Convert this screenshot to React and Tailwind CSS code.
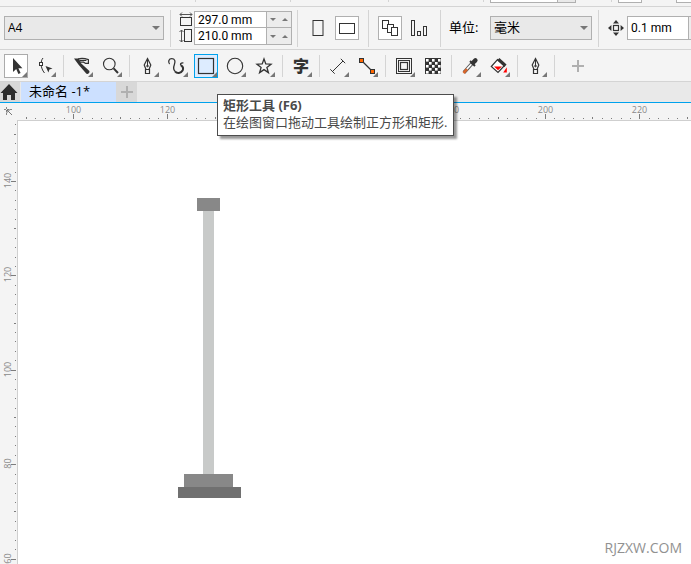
import { useEffect, useState } from "react";
import clsx from "clsx";

const STEP = 9.44;
const DARK = "#333333";

// Both rulers count in millimetres, one tick every 2 mm
const horizontalTicks = (length) =>
  Array.from({ length: Math.ceil(length / STEP) }, (_, i) => ({
    pos: Math.round(73 + (i - 5) * STEP) + 0.5,
    value: 90 + i * 2,
  })).filter((t) => t.pos < length);

const verticalTicks = (length) =>
  Array.from({ length: Math.ceil(length / STEP) }, (_, i) => ({
    pos: Math.round(61 + (i - 6) * STEP) + 0.5,
    value: 152 - i * 2,
  })).filter((t) => t.pos < length);

const useWindowSize = () => {
  const [size, setSize] = useState({ width: window.innerWidth, height: window.innerHeight });

  useEffect(() => {
    const onResize = () => setSize({ width: window.innerWidth, height: window.innerHeight });
    window.addEventListener("resize", onResize);
    return () => window.removeEventListener("resize", onResize);
  }, []);

  return size;
};

const Icon = ({ children, size = 22 }) => (
  <svg width={size} height={size} viewBox="0 0 22 22" fill="none" stroke={DARK} aria-hidden="true">
    {children}
  </svg>
);

const PenIcon = () => (
  <Icon>
    <path d="M10.5 3.5 L13.8 10 L12 14.5 H9 L7.2 10 Z" strokeWidth="1.2" />
    <path d="M10.5 4 V10.5" />
    <circle cx="10.5" cy="11" r="0.8" fill={DARK} />
    <path d="M8.5 14.5 H12.5 V18.5 H8.5 Z" strokeWidth="1.2" />
  </Icon>
);

const tools = [
  {
    id: "pick",
    label: "选择工具",
    icon: (
      <Icon>
        <path d="M8 3 V17 L11.2 14 L13.4 19 L15.6 18 L13.4 13.2 H17.4 Z" fill={DARK} stroke="none" />
      </Icon>
    ),
    flyout: true,
  },
  {
    id: "shape",
    label: "形状工具",
    icon: (
      <Icon>
        <path d="M9 3 C6.3 6 6.3 13 10.5 18" />
        <rect x="5.5" y="7.5" width="3" height="3" fill="white" />
        <path d="M11.5 11 L18.5 13.6 L15.4 14.6 L14.4 17.6 Z" fill={DARK} stroke="none" />
      </Icon>
    ),
    flyout: true,
  },
  null,
  {
    id: "crop",
    label: "裁剪工具",
    icon: (
      <Icon>
        <path d="M3 3.6 H8 L10 8.2 L18.4 16 C19 18 17 19.4 15.4 18.8 L7.6 9.8 Z" fill={DARK} stroke="none" />
        <path d="M7 4 C10 3 14 3.4 17.4 4.6 V8.4 H14.6 L12.6 7.2 H8" strokeWidth="1.2" />
        <path d="M9 5.4 H15.4" strokeWidth="1.2" />
      </Icon>
    ),
    flyout: true,
  },
  {
    id: "zoom",
    label: "缩放工具",
    icon: (
      <Icon>
        <circle cx="9.3" cy="9" r="5.8" strokeWidth="1.1" />
        <path d="M13.6 13.4 L18 18" strokeWidth="2" />
      </Icon>
    ),
    flyout: true,
  },
  null,
  { id: "pen", label: "钢笔工具", icon: <PenIcon />, flyout: true },
  {
    id: "curve",
    label: "曲线工具",
    icon: (
      <Icon>
        <path d="M3.6 9 C1.6 6.8 3 3.6 5.7 3.6 C9 3.6 9.6 6.4 8.4 9.4 C7.4 12 7.4 14.6 9 16.4" strokeWidth="1.3" />
        <path d="M9 16.4 C11 18.8 15 18.4 16.6 15.6 C17.8 13 16.6 11.4 15 10.4" strokeWidth="2" />
        <path d="M15.4 10.8 C13.6 9.4 14.6 7.6 17.4 7.8" strokeWidth="1.3" />
      </Icon>
    ),
    flyout: true,
  },
  {
    id: "rect",
    label: "矩形工具",
    icon: (
      <Icon>
        <rect x="3.5" y="3.5" width="15" height="15" strokeWidth="1.2" />
      </Icon>
    ),
    flyout: true,
  },
  {
    id: "ellipse",
    label: "椭圆形工具",
    icon: (
      <Icon>
        <circle cx="11" cy="11" r="7.7" strokeWidth="1.1" />
      </Icon>
    ),
    flyout: true,
  },
  {
    id: "star",
    label: "星形工具",
    icon: (
      <Icon>
        <path
          d="M11 4 L12.8 8.9 L18 9.2 L13.9 12.4 L15.4 17.6 L11 14.6 L6.6 17.6 L8.1 12.4 L4 9.2 L9.2 8.9 Z"
          strokeWidth="1.3"
        />
      </Icon>
    ),
    flyout: true,
  },
  null,
  {
    id: "text",
    label: "文本工具",
    icon: <span className="text-base leading-none font-black text-[#333333]">字</span>,
    flyout: true,
  },
  null,
  {
    id: "dimension",
    label: "平行度量工具",
    icon: (
      <Icon>
        <path d="M5.5 16.5 L16 6 M3.3 14.3 L7.7 18.7 M13.8 3.8 L18.2 8.2" />
      </Icon>
    ),
    flyout: true,
  },
  {
    id: "connector",
    label: "连接器工具",
    icon: (
      <Icon>
        <path d="M6 6 L17 17" strokeWidth="1.3" />
        <rect x="3.5" y="3.5" width="4" height="4" fill="#ff6600" />
        <rect x="14.5" y="14.5" width="4" height="4" fill="#ff6600" />
      </Icon>
    ),
    flyout: true,
  },
  null,
  {
    id: "contour",
    label: "轮廓图工具",
    icon: (
      <Icon>
        <rect x="3.5" y="3.5" width="15" height="15" />
        <rect x="5.5" y="5.5" width="11" height="11" />
        <rect x="7.5" y="7.5" width="7" height="7" strokeWidth="1.2" />
      </Icon>
    ),
    flyout: true,
  },
  {
    id: "transparency",
    label: "透明度工具",
    icon: (
      <Icon>
        <rect x="3" y="3" width="16" height="16" fill={DARK} stroke="none" />
        {[0, 1, 2, 3, 4].map((row) =>
          [0, 1, 2, 3, 4].map(
            (col) =>
              (row + col) % 2 === 0 && (
                <rect
                  key={`${row}-${col}`}
                  x={4 + col * 3}
                  y={4 + row * 3}
                  width="2.6"
                  height="2.6"
                  fill="white"
                  stroke="none"
                />
              )
          )
        )}
      </Icon>
    ),
  },
  null,
  {
    id: "eyedropper",
    label: "颜色滴管工具",
    icon: (
      <Icon>
        <path d="M5 17.5 L13 8.5" stroke="#555555" strokeWidth="3.4" />
        <path d="M7.6 14.4 L13 8.5" stroke="white" strokeWidth="1.6" />
        <path d="M4.5 18 L8 14.2" stroke="#d9662b" strokeWidth="2.6" />
        <path d="M11 6 L16 11" strokeWidth="2" />
        <path d="M14 7.8 L16.4 5.4" strokeWidth="4.4" strokeLinecap="round" />
      </Icon>
    ),
    flyout: true,
  },
  {
    id: "fill",
    label: "交互式填充工具",
    icon: (
      <Icon>
        <path d="M9.5 4.5 L16.5 10.5 L10 17.5 L3.3 11.5 Z" fill="white" strokeWidth="1.2" />
        <path d="M10.3 4.2 L17.5 10.8" strokeWidth="3.2" />
        <path d="M6 11.5 H14 L10 15.3 Z" fill="#ff0000" stroke="none" />
        <path d="M15.2 17.6 L18.8 12.2 V17.6 Z" fill="#ff0000" stroke="none" />
      </Icon>
    ),
    flyout: true,
  },
  null,
  { id: "outline", label: "轮廓笔", icon: <PenIcon />, flyout: true },
  null,
];

const Separator = () => <div className="mx-px h-[22px] w-px shrink-0 bg-[#d4d4d4]" />;

const BarSeparator = () => <div className="h-[37px] w-px shrink-0 bg-[#d4d4d4]" />;

const ToolButton = ({ tool, active, selected, onClick }) => (
  <button
    type="button"
    aria-label={tool.label}
    onClick={onClick}
    className={clsx(
      "relative flex h-6 w-6 shrink-0 items-center justify-center border",
      active && "border-[#00a2ed] bg-[#ddecff]",
      selected && !active && "border-[#ababab] bg-white",
      !active && !selected && "border-transparent"
    )}
  >
    {tool.icon}
    {tool.flyout && (
      <svg className="absolute right-0 bottom-0" width="5" height="5" aria-hidden="true">
        <path d="M5 0 V5 H0 Z" fill="#777777" />
      </svg>
    )}
  </button>
);

const SelectBox = ({ id, label, options, className }) => (
  <div className={clsx("relative h-6 shrink-0", className)}>
    <select
      id={id}
      aria-label={label}
      className="h-full w-full appearance-none border border-[#b0b0b0] bg-[#e9e9e9] pl-[3px] text-black"
    >
      {options.map((o) => (
        <option key={o}>{o}</option>
      ))}
    </select>
    <svg className="pointer-events-none absolute top-[10px] right-1" width="8" height="4" aria-hidden="true">
      <path d="M0 0 H8 L4 4 Z" fill="#777777" />
    </svg>
  </div>
);

const Spinner = ({ label }) => (
  <div className="flex w-6 items-center justify-center gap-[6px] bg-[#ececec]">
    <button type="button" aria-label={`减小${label}`}>
      <svg width="6" height="3" aria-hidden="true">
        <path d="M0 0 H6 L3 3 Z" fill="#777777" />
      </svg>
    </button>
    <button type="button" aria-label={`增大${label}`}>
      <svg width="6" height="3" aria-hidden="true">
        <path d="M0 3 H6 L3 0 Z" fill="#777777" />
      </svg>
    </button>
  </div>
);

const SizeField = ({ label, value }) => (
  <div className="flex h-4 divide-x divide-[#b0b0b0]">
    <input
      aria-label={label}
      defaultValue={value}
      className="w-[72px] bg-white pl-[3px] font-[Roboto,sans-serif] text-xs leading-4 text-black"
    />
    <Spinner label={label} />
  </div>
);

const PropertyBar = () => (
  <div className="flex h-[43px] items-center overflow-hidden border-b border-[#d4d4d4] pl-1">
    <SelectBox id="paper" label="页面大小" options={["A4", "A3", "A5"]} className="w-40 text-xs" />
    <div className="ml-[6px] flex">
      <BarSeparator />
    </div>
    <div className="ml-2 flex shrink-0 items-center gap-px">
      <svg width="14" height="32" fill="none" stroke={DARK} aria-hidden="true">
        <path d="M1 2.5 H13 M3 .5 L1 2.5 L3 4.5 M11 .5 L13 2.5 L11 4.5" stroke="#555555" />
        <rect x="1.5" y="5.5" width="11" height="8" />
        <path d="M2.5 18 V30 M.5 20 L2.5 18 L4.5 20 M.5 28 L2.5 30 L4.5 28" stroke="#555555" />
        <rect x="5.5" y="17.5" width="7" height="12" />
      </svg>
      <div className="flex flex-col divide-y divide-[#b0b0b0] border border-[#b0b0b0]">
        <SizeField label="宽度" value="297.0 mm" />
        <SizeField label="高度" value="210.0 mm" />
      </div>
    </div>
    <div className="ml-[5px] flex">
      <BarSeparator />
    </div>
    <div className="ml-2 flex shrink-0 items-center gap-[5px]">
      <button type="button" aria-label="纵向" className="flex h-6 w-6 items-center justify-center">
        <svg width="12" height="16" fill="none" stroke={DARK} aria-hidden="true">
          <rect x="1" y=".5" width="10" height="15" />
        </svg>
      </button>
      <button
        type="button"
        aria-label="横向"
        className="flex h-6 w-6 items-center justify-center border border-[#b0b0b0] bg-white"
      >
        <svg width="16" height="12" fill="none" stroke={DARK} aria-hidden="true">
          <rect x=".5" y="1.5" width="15" height="10" />
        </svg>
      </button>
    </div>
    <div className="ml-[9px] flex">
      <BarSeparator />
    </div>
    <div className="ml-[9px] flex shrink-0 items-center gap-[5px]">
      <button
        type="button"
        aria-label="所有页面"
        className="flex h-6 w-6 items-center justify-center border border-[#b0b0b0] bg-white"
      >
        <svg width="18" height="18" fill="white" stroke={DARK} aria-hidden="true">
          <rect x="1.5" y="1.5" width="6" height="8" />
          <rect x="6.5" y="5.5" width="6" height="8" />
          <rect x="10.5" y="8.5" width="6" height="8" />
        </svg>
      </button>
      <button type="button" aria-label="当前页面" className="flex h-6 w-6 items-center justify-center">
        <svg width="18" height="18" fill="none" stroke={DARK} aria-hidden="true">
          <rect x="1.5" y="1.5" width="3" height="15" />
          <rect x="7.5" y="12.5" width="3" height="4" />
          <rect x="13.5" y="7.5" width="3" height="9" />
        </svg>
      </button>
    </div>
    <div className="ml-[9px] flex">
      <BarSeparator />
    </div>
    <label htmlFor="units" className="ml-2 w-[41px] shrink-0 text-[13px] whitespace-nowrap text-black">
      单位:
    </label>
    <SelectBox id="units" label="单位" options={["毫米", "厘米", "英寸"]} className="w-[102px] text-[13px]" />
    <div className="ml-[6px] flex">
      <BarSeparator />
    </div>
    <label htmlFor="nudge" aria-label="微调距离" className="ml-[9px] shrink-0">
      <svg width="16" height="16" fill="none" stroke={DARK} aria-hidden="true">
        <rect x="5.5" y="5.5" width="5" height="5" strokeWidth="1.2" />
        <path
          d="M8 0 L11 3.4 H5 Z M8 16 L11 12.6 H5 Z M0 8 L3.4 5 V11 Z M16 8 L12.6 5 V11 Z"
          fill={DARK}
          stroke="none"
        />
      </svg>
    </label>
    <div className="ml-[3px] flex h-6 shrink-0 divide-x divide-[#b0b0b0] border border-[#b0b0b0]">
      <input
        id="nudge"
        defaultValue="0.1 mm"
        className="w-[61px] bg-white pl-[3px] font-[Roboto,sans-serif] text-xs text-black"
      />
      <Spinner label="微调距离" />
    </div>
  </div>
);

const TopStrip = () => (
  <div className="flex h-[7px] items-start overflow-hidden border-b border-[#d4d4d4]">
    <div className="ml-[195px] h-[2px] w-px shrink-0 bg-[#d4d4d4]" />
    <div className="ml-[94px] h-[2px] w-px shrink-0 bg-[#d4d4d4]" />
    <div className="ml-[97px] h-[2px] w-px shrink-0 bg-[#d4d4d4]" />
    <div className="ml-[94px] h-[2px] w-px shrink-0 bg-[#d4d4d4]" />
    <div className="ml-[6px] flex h-[3px] w-[86px] shrink-0 border border-t-0 border-[#b0b0b0] bg-white">
      <div className="ml-auto w-[18px] border-l border-[#b0b0b0] bg-[#e9e9e9]" />
    </div>
    <div className="ml-[35px] h-[2px] w-px shrink-0 bg-[#d4d4d4]" />
    <div className="ml-[6px] h-[3px] w-6 shrink-0 border border-t-0 border-[#b0b0b0] bg-white" />
    <div className="ml-[34px] h-[3px] w-6 shrink-0 border border-t-0 border-[#b0b0b0] bg-white" />
  </div>
);

const Tooltip = () => (
  <div
    role="tooltip"
    className="absolute top-10 left-[23px] z-10 border border-[#4d4d4d] bg-white pt-[2px] pr-[6px] pb-1 pl-[5px] text-[13px] leading-[17px] whitespace-nowrap text-[#4a4a4a] shadow-[3px_3px_2px_rgba(0,0,0,0.4)]"
  >
    <p className="font-bold">矩形工具 (F6)</p>
    <p>在绘图窗口拖动工具绘制正方形和矩形.</p>
  </div>
);

const HorizontalRuler = ({ length }) => (
  <svg className="block h-[17px] w-full shrink-0" fill="#8a8a8a" fontSize="9" aria-hidden="true">
    {horizontalTicks(length).map(({ pos, value }) => (
      <g key={value}>
        <path
          d={`M${pos} 16 V${value % 20 === 0 ? 11 : value % 10 === 0 ? 14 : 15}`}
          stroke="#7d7d7d"
        />
        {value % 20 === 0 && (
          <text x={pos} y="10" textAnchor="middle">
            {value}
          </text>
        )}
      </g>
    ))}
    <path d="M4 6.5 H13 M6.5 4 V13" fill="none" stroke="#888888" strokeDasharray="2 1" />
    <path d="M7 7 L12 12 M7 10 V7 H10" fill="none" stroke="#777777" />
  </svg>
);

const VerticalRuler = ({ length }) => (
  <svg className="block h-full w-[17px] shrink-0" fill="#8a8a8a" fontSize="9" aria-hidden="true">
    {verticalTicks(length).map(({ pos, value }) => (
      <g key={value}>
        <path d={`M16 ${pos} H${value % 20 === 0 ? 11 : value % 10 === 0 ? 14 : 15}`} stroke="#7d7d7d" />
        {value % 20 === 0 && (
          <text transform={`translate(11 ${pos - 1}) rotate(-90)`} textAnchor="middle">
            {value}
          </text>
        )}
      </g>
    ))}
  </svg>
);

const App = () => {
  const [hovered, setHovered] = useState("rect");
  const { width, height } = useWindowSize();

  return (
    <div className="flex h-screen w-full flex-col overflow-hidden bg-[#f4f4f4] font-['Open_Sans','Noto_Sans_CJK_SC',sans-serif]">
      <TopStrip />
      <PropertyBar />

      {/* Toolbox */}
      <div className="flex h-8 shrink-0 items-center gap-[5px] border-b border-[#d4d4d4] pl-1">
        {tools.map((tool, i) =>
          tool ? (
            <div key={tool.id} className="relative">
              <ToolButton
                tool={tool}
                active={hovered === tool.id}
                selected={tool.id === "pick"}
                onClick={() => setHovered(tool.id)}
              />
              {tool.id === "rect" && hovered === "rect" && <Tooltip />}
            </div>
          ) : (
            <Separator key={i} />
          )
        )}
        <button type="button" aria-label="快速自定义" className="ml-[5px] flex h-6 w-6 items-center justify-center">
          <svg width="12" height="12" aria-hidden="true">
            <path d="M6 0 V12 M0 6 H12" stroke="#b0b0b0" strokeWidth="2" />
          </svg>
        </button>
      </div>

      {/* Document tabs */}
      <div className="flex h-[21px] shrink-0 border-b border-[#00a2ed] bg-[#e9e9e9]">
        <button type="button" aria-label="欢迎屏幕" className="mr-px flex w-5 items-center bg-[#d8d8d8]">
          <svg width="18" height="18" aria-hidden="true">
            <path d="M9 1 L17.5 10 H15 V17 H11 V12 H7 V17 H3 V10 H.5 Z" fill="#2d2d2d" />
          </svg>
        </button>
        <button
          type="button"
          className="flex w-[95px] items-start bg-[#cce0ff] pl-2 text-[13px] leading-[18px] whitespace-nowrap text-black"
        >
          未命名 -1*
        </button>
        <button type="button" aria-label="新建文档" className="flex w-[21px] items-center justify-center bg-[#d8d8d8]">
          <svg width="12" height="12" aria-hidden="true">
            <path d="M6 0 V12 M0 6 H12" stroke="#b0b0b0" strokeWidth="2" />
          </svg>
        </button>
      </div>

      <HorizontalRuler length={width} />

      {/* Drawing page */}
      <div className="flex min-h-0 flex-1">
        <VerticalRuler length={height - 120} />
        <main className="relative flex-1 border-t border-l border-[#cfcfcf] bg-white">
          <svg className="block h-full w-full" role="img" aria-label="立柱">
            <rect x="185" y="90" width="11" height="264" fill="#c8cac9" />
            <rect x="179" y="77" width="23" height="13" fill="#888888" />
            <rect x="166" y="353" width="49" height="13" fill="#888888" />
            <rect x="160" y="366" width="63" height="11" fill="#707070" />
          </svg>
          <p className="absolute right-[9px] bottom-[6px] text-sm leading-5 text-[#919191]">RJZXW.COM</p>
        </main>
      </div>
    </div>
  );
};

export default App;
